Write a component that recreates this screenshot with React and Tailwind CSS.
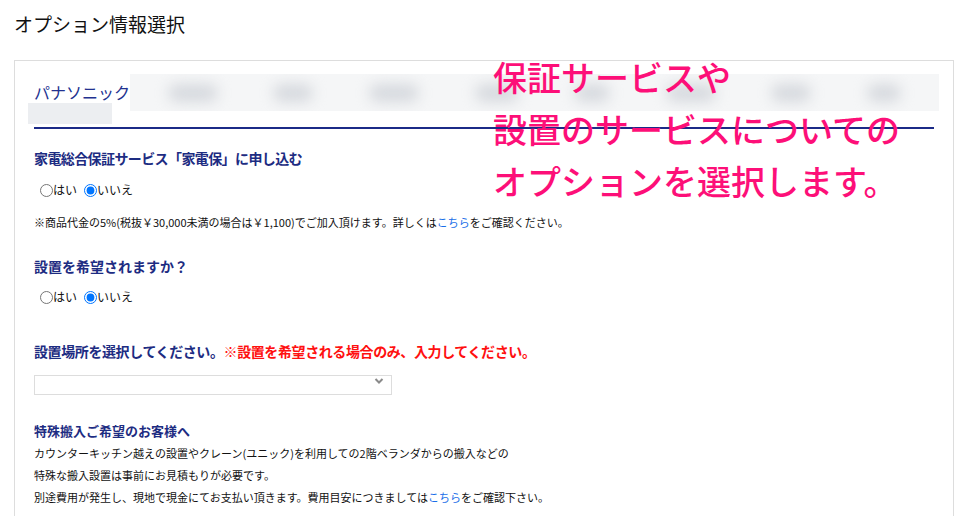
import React from "react";

const jp = "font-['Noto_Sans_CJK_JP','Noto_Sans',sans-serif]";

function Blob({ w = 44 }) {
  return <div className="h-[18px] rounded-full bg-[#d6d9de] blur-[7px]" style={{ width: w }} />;
}

function YesNo({ name }) {
  return (
    <div className="flex items-center text-[12px] leading-[20px] text-[#111]">
      <input type="radio" name={name} readOnly className="m-0 ml-[6px] h-[13px] w-[13px]" />
      <span>はい</span>
      <input type="radio" name={name} readOnly checked className="m-0 ml-[7px] h-[13px] w-[13px]" />
      <span>いいえ</span>
    </div>
  );
}

export default function App() {
  return (
    <div className={`relative h-[516px] w-[974px] overflow-hidden bg-white ${jp}`}>
      <h1 className="pl-[14px] pt-[10px] text-[19px] leading-[28px] text-[#111]">オプション情報選択</h1>

      <div className="ml-[14px] mt-[22px] h-[600px] w-[940px] border border-[#dddddd] px-[19px] pt-[13px]">
        <div className="flex items-center">
          <span className="text-[16px] leading-[37px] text-[#22318f]">パナソニック</span>
          <div className="-mr-[5px] flex h-[37px] flex-1 items-center justify-around overflow-hidden bg-[#f5f6f7] px-[10px]">
            <Blob w={50} />
            <Blob w={40} />
            <Blob w={50} />
            <Blob w={44} />
            <Blob w={36} />
            <Blob w={50} />
            <Blob w={40} />
            <Blob w={34} />
          </div>
        </div>
        <div className="-ml-[6px] -mt-[8px] h-[21px] w-[84px] bg-[#eceef1]" />

        <div className="mt-[3px] h-[2px] bg-[#1b2a87]" />

        <h2 className="mt-[19px] text-[14px] font-bold leading-[20px] tracking-[-0.6px] text-[#1d2c82]">
          家電総合保証サービス「家電保」に申し込む
        </h2>
        <div className="mt-[12px]">
          <YesNo name="hosho" />
        </div>
        <p className="mt-[13px] text-[11px] leading-[18px] text-[#111]">
          ※商品代金の5%(税抜￥30,000未満の場合は￥1,100)でご加入頂けます。詳しくは
          <span className="text-[#1a6ee8]">こちら</span>をご確認ください。
        </p>

        <h2 className="mt-[25px] text-[14px] font-bold leading-[20px] text-[#1d2c82]">設置を希望されますか？</h2>
        <div className="mt-[11px]">
          <YesNo name="setchi" />
        </div>

        <h2 className="mt-[34px] text-[14px] font-bold leading-[20px] tracking-[-0.4px] text-[#1d2c82]">
          設置場所を選択してください。
          <span className="text-[#ff1010]">※設置を希望される場合のみ、入力してください。</span>
        </h2>
        <div className="relative mt-[10px] h-[20px] w-[358px]">
          <select className="h-full w-full appearance-none border border-[#dddddd] bg-white text-[12px]" />
          <svg className="absolute right-[8px] top-[6px]" width="10" height="8" viewBox="0 0 10 8">
            <path d="M1.5 2 L5 5.5 L8.5 2" fill="none" stroke="#8a8a8a" strokeWidth="2" />
          </svg>
        </div>

        <h3 className="mt-[30px] text-[13px] font-bold leading-[20px] text-[#1d2c82]">特殊搬入ご希望のお客様へ</h3>
        <div className="mt-[1px] text-[11px] leading-[22px] text-[#111]">
          <p>カウンターキッチン越えの設置やクレーン(ユニック)を利用しての2階ベランダからの搬入などの</p>
          <p>特殊な搬入設置は事前にお見積もりが必要です。</p>
          <p>
            別途費用が発生し、現地で現金にてお支払い頂きます。費用目安につきましては
            <span className="text-[#1a6ee8]">こちら</span>をご確認下さい。
          </p>
        </div>
      </div>

      <div className="absolute left-[493px] top-[51px] text-[34px] font-medium leading-[52px] text-[#fd0f78]">
        <p>保証サービスや</p>
        <p>設置のサービスについての</p>
        <p>オプションを選択します。</p>
      </div>
    </div>
  );
}
